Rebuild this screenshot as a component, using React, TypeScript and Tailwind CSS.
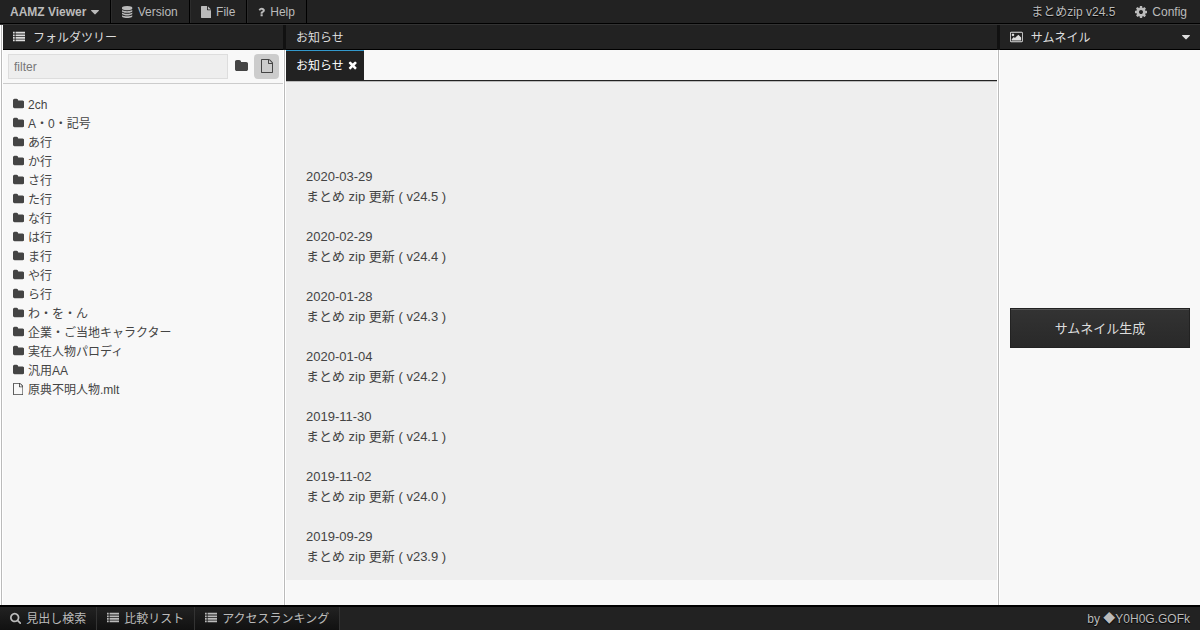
import type { ReactNode } from "react";

const icons = {
  caret: { box: "384 0 1024 1792", d: "M1408 704q0 26-19 45l-448 448q-19 19-45 19t-45-19l-448-448q-19-19-19-45t19-45 45-19h896q26 0 45 19t19 45z" },
  database: {
    box: "128 0 1536 1792",
    d: "M896 768q237 0 443-43t325-127v170q0 69-103 128t-280 93.5-385 34.5-385-34.5-280-93.5-103-128v-170q119 84 325 127t443 43zm0 768q237 0 443-43t325-127v170q0 69-103 128t-280 93.5-385 34.5-385-34.5-280-93.5-103-128v-170q119 84 325 127t443 43zm0-384q237 0 443-43t325-127v170q0 69-103 128t-280 93.5-385 34.5-385-34.5-280-93.5-103-128v-170q119 84 325 127t443 43zm0-1152q208 0 385 34.5t280 93.5 103 128v128q0 69-103 128t-280 93.5-385 34.5-385-34.5-280-93.5-103-128v-128q0-69 103-128t280-93.5 385-34.5z",
  },
  file: {
    box: "128 0 1536 1792",
    d: "M1152 512v-472q22 14 36 28l408 408q14 14 28 36h-472zm-128 32q0 40 28 68t68 28h544v1056q0 40-28 68t-68 28h-1344q-40 0-68-28t-28-68v-1600q0-40 28-68t68-28h800v544z",
  },
  fileOutline: {
    box: "128 0 1536 1792",
    d: "M1596 380q28 28 48 76t20 88v1152q0 40-28 68t-68 28h-1344q-40 0-68-28t-28-68v-1600q0-40 28-68t68-28h896q40 0 88 20t76 48zm-444-244v376h376q-10-29-22-41l-313-313q-12-12-41-22zm384 1528v-1024h-416q-40 0-68-28t-28-68v-416h-768v1536h1280z",
  },
  question: {
    box: "384 0 1024 1792",
    d: "M1088 1256v240q0 16-12 28t-28 12h-240q-16 0-28-12t-12-28v-240q0-16 12-28t28-12h240q16 0 28 12t12 28zm316-600q0 54-15.5 101t-35 76.5-55 59.5-57.5 43.5-61 35.5q-41 23-68.5 65t-27.5 67q0 17-12 32.5t-28 15.5h-240q-15 0-25.5-18.5t-10.5-37.5v-45q0-83 65-156.5t143-108.5q59-27 84-56t25-76q0-42-46.5-74t-107.5-32q-65 0-108 29-35 25-107 115-13 16-31 16-12 0-25-8l-164-125q-13-10-15.5-25t5.5-28q160-266 464-266 80 0 161 31t146 83 106 127.5 41 158.5z",
  },
  cog: {
    box: "128 0 1536 1792",
    d: "M1152 896q0-106-75-181t-181-75-181 75-75 181 75 181 181 75 181-75 75-181zm512-109v222q0 12-8 23t-20 13l-185 28q-19 54-39 91 35 50 107 138 10 12 10 25t-9 23q-27 37-99 108t-94 71q-12 0-26-9l-138-108q-44 23-91 38-16 136-29 186-7 28-36 28h-222q-14 0-24.5-8.5t-11.5-21.5l-28-184q-49-16-90-37l-141 107q-10 9-25 9-14 0-25-11-126-114-165-168-7-10-7-23 0-12 8-23 15-21 51-66.5t54-70.5q-27-50-41-99l-183-27q-13-2-21-12.5t-8-23.5v-222q0-12 8-23t19-13l186-28q14-46 39-92-40-57-107-138-10-12-10-24 0-10 9-23 26-36 98.5-107.5t94.5-71.5q13 0 26 10l138 107q44-23 91-38 16-136 29-186 7-28 36-28h222q14 0 24.5 8.5t11.5 21.5l28 184q49 16 90 37l142-107q9-9 24-9 13 0 25 10 129 119 165 170 7 8 7 22 0 12-8 23-15 21-51 66.5t-54 70.5q26 50 41 98l183 28q13 2 21 12.5t8 23.5z",
  },
  list: {
    box: "0 0 1792 1792",
    d: "M0 1280h256v256h-256zM0 896h256v256h-256zM0 512h256v256h-256zM0 128h256v256h-256zM384 1280h1408v256h-1408zM384 896h1408v256h-1408zM384 512h1408v256h-1408zM384 128h1408v256h-1408z",
  },
  image: {
    box: "-64 0 1920 1792",
    d: "M576 576q0 80-56 136t-136 56-136-56-56-136 56-136 136-56 136 56 56 136zm1024 384v448h-1408v-192l320-320 160 160 512-512zm96-704h-1600q-13 0-22.5 9.5t-9.5 22.5v1216q0 13 9.5 22.5t22.5 9.5h1600q13 0 22.5-9.5t9.5-22.5v-1216q0-13-9.5-22.5t-22.5-9.5zm160 32v1216q0 66-47 113t-113 47h-1600q-66 0-113-47t-47-113v-1216q0-66 47-113t113-47h1600q66 0 113 47t47 113z",
  },
  folder: {
    box: "64 0 1664 1792",
    d: "M1728 608v704q0 92-66 158t-158 66h-1216q-92 0-158-66t-66-158v-960q0-92 66-158t158-66h320q92 0 158 66t66 158v32h672q92 0 158 66t66 158z",
  },
  search: {
    box: "64 0 1664 1792",
    d: "M1216 832q0-185-131.5-316.5t-316.5-131.5-316.5 131.5-131.5 316.5 131.5 316.5 316.5 131.5 316.5-131.5 131.5-316.5zm512 832q0 52-38 90t-90 38q-54 0-90-38l-343-342q-179 124-399 124-143 0-273.5-55.5t-225-150-150-225-55.5-273.5 55.5-273.5 150-225 225-150 273.5-55.5 273.5 55.5 225 150 150 225 55.5 273.5q0 220-124 399l343 343q37 37 37 90z",
  },
  times: {
    box: "192 0 1408 1792",
    d: "M1490 1322q0 40-28 68l-136 136q-28 28-68 28t-68-28l-294-294-294 294q-28 28-68 28t-68-28l-136-136q-28-28-28-68t28-68l294-294-294-294q-28-28-28-68t28-68l136-136q28-28 68-28t68 28l294 294 294-294q28-28 68-28t68 28l136 136q28 28 28 68t-28 68l-294 294 294 294q28 28 28 68z",
  },
};

type IconName = keyof typeof icons;

function Icon({ name, className = "h-3" }: { name: IconName; className?: string }) {
  return (
    <svg viewBox={icons[name].box} className={`w-auto shrink-0 fill-current ${className}`} aria-hidden="true">
      <path d={icons[name].d} />
    </svg>
  );
}

const folders = [
  "2ch",
  "A・0・記号",
  "あ行",
  "か行",
  "さ行",
  "た行",
  "な行",
  "は行",
  "ま行",
  "や行",
  "ら行",
  "わ・を・ん",
  "企業・ご当地キャラクター",
  "実在人物パロディ",
  "汎用AA",
];

const news = [
  { date: "2020-03-29", version: "v24.5" },
  { date: "2020-02-29", version: "v24.4" },
  { date: "2020-01-28", version: "v24.3" },
  { date: "2020-01-04", version: "v24.2" },
  { date: "2019-11-30", version: "v24.1" },
  { date: "2019-11-02", version: "v24.0" },
  { date: "2019-09-29", version: "v23.9" },
];

function NavButton({ icon, children }: { icon: IconName; children: ReactNode }) {
  return (
    <button type="button" className="flex items-center gap-[5px] border-r border-l border-r-black border-l-[#2c2c2c] pr-[11px] pl-[10px]">
      <Icon name={icon} />
      {children}
    </button>
  );
}

function FootButton({ icon, children }: { icon: IconName; children: ReactNode }) {
  return (
    <button type="button" className="flex items-center gap-[5px] border-r border-[#333] bg-linear-to-b from-[#222] to-[#111] px-[10px]">
      <Icon name={icon} className="mb-0.5 h-3" />
      {children}
    </button>
  );
}

function PanelHeader({ icon, title, children }: { icon?: IconName; title: string; children?: ReactNode }) {
  return (
    <div className="flex h-[25px] shrink-0 items-center gap-2 border-b border-black bg-[#222] px-[10px] text-[#ddd]">
      {icon && <Icon name={icon} className="mb-px h-3" />}
      <h2 className="grow pt-0.5">{title}</h2>
      {children}
    </div>
  );
}

function TreeItem({ icon, name }: { icon: IconName; name: string }) {
  return (
    <li className="flex h-[19px] items-center">
      <span className="w-[15px]">
        <Icon name={icon} />
      </span>
      <span className="pt-0.5">{name}</span>
    </li>
  );
}

function Divider() {
  return (
    <div className="flex w-[3px] shrink-0 flex-col items-center bg-white">
      <div className="h-[25px] w-full bg-[#111]" />
      <div className="w-px grow bg-[#bbb]" />
    </div>
  );
}

export default function App() {
  return (
    <div className="flex h-screen flex-col bg-[#f8f8f8] font-['Liberation_Sans','Noto_Sans_CJK_JP',sans-serif] text-xs text-[#444]">
      <nav className="flex h-6 shrink-0 border-b border-black bg-[#222] text-[#bbb] [text-shadow:0_1px_1px_#000]">
        <button type="button" className="flex items-center gap-[5px] border-r border-black pr-[11px] pl-[10px] font-bold">
          AAMZ Viewer
          <Icon name="caret" className="h-[14px]" />
        </button>
        <NavButton icon="database">Version</NavButton>
        <NavButton icon="file">File</NavButton>
        <NavButton icon="question">Help</NavButton>
        <span className="ml-auto flex items-center px-[10px]">まとめzip v24.5</span>
        <button type="button" className="flex items-center gap-[5px] pr-[13px] pl-[10px]">
          <Icon name="cog" className="h-[14px]" />
          Config
        </button>
      </nav>

      <main className="flex min-h-0 grow border-t border-[#333]">
        <div className="flex w-[3px] shrink-0 justify-center bg-white">
          <div className="w-px bg-[#bbb]" />
        </div>
        <section className="flex w-[280px] shrink-0 flex-col">
          <PanelHeader icon="list" title="フォルダツリー" />
          <div className="flex h-[34px] items-center gap-px border-b border-[#ccc] pr-1 pl-[5px]">
            <input
              type="text"
              placeholder="filter"
              aria-label="filter"
              className="h-[25px] min-w-0 grow border border-[#ddd] bg-[#eee] px-[5px] placeholder:text-[#777]"
            />
            <button type="button" aria-label="フォルダ" className="flex h-[25px] w-6 items-center justify-center">
              <Icon name="folder" className="mb-px h-[14px]" />
            </button>
            <button type="button" aria-label="ファイル" className="flex size-[25px] items-center justify-center rounded bg-[#ccc]">
              <Icon name="fileOutline" className="mb-px h-[14px]" />
            </button>
          </div>
          <ul className="p-[10px]">
            {folders.map((name) => (
              <TreeItem key={name} icon="folder" name={name} />
            ))}
            <TreeItem icon="fileOutline" name="原典不明人物.mlt" />
          </ul>
        </section>

        <Divider />
        <section className="flex min-w-0 grow flex-col">
          <PanelHeader title="お知らせ" />
          <div className="flex h-[31px] shrink-0 border-b border-[#222]">
            <div className="flex items-center gap-1 border-t border-[#39c] bg-[#222] pr-[7px] pl-[10px] text-white">
              お知らせ
              <button type="button" aria-label="閉じる" className="mb-0.5">
                <Icon name="times" />
              </button>
            </div>
          </div>
          <div className="mb-[25px] min-h-0 grow overflow-hidden border-t border-[#bbb] bg-[#eee] px-5 pt-[85px] text-[13px] leading-5">
            {news.map(({ date, version }) => (
              <article key={date} className="mb-5">
                <p>{date}</p>
                <p className="h-5">まとめ zip 更新 ( {version} )</p>
              </article>
            ))}
          </div>
        </section>

        <Divider />
        <section className="flex w-[200px] shrink-0 flex-col">
          <PanelHeader icon="image" title="サムネイル">
            <button type="button" aria-label="メニュー">
              <Icon name="caret" className="h-[14px]" />
            </button>
          </PanelHeader>
          <div className="flex grow items-center px-[10px]">
            <button
              type="button"
              className="h-10 w-full border border-[#222] bg-linear-to-b from-[#333] to-[#292929] pt-0.5 text-[13px] text-[#ddd] shadow-[inset_0_1px_0_#555]"
            >
              サムネイル生成
            </button>
          </div>
        </section>
      </main>

      <footer className="flex h-[25px] shrink-0 border-t-2 border-black bg-[#222] text-[#bbb] [text-shadow:0_1px_1px_#000]">
        <FootButton icon="search">見出し検索</FootButton>
        <FootButton icon="list">比較リスト</FootButton>
        <FootButton icon="list">アクセスランキング</FootButton>
        <span className="ml-auto flex items-center px-[10px]">by ◆Y0H0G.GOFk</span>
      </footer>
    </div>
  );
}
